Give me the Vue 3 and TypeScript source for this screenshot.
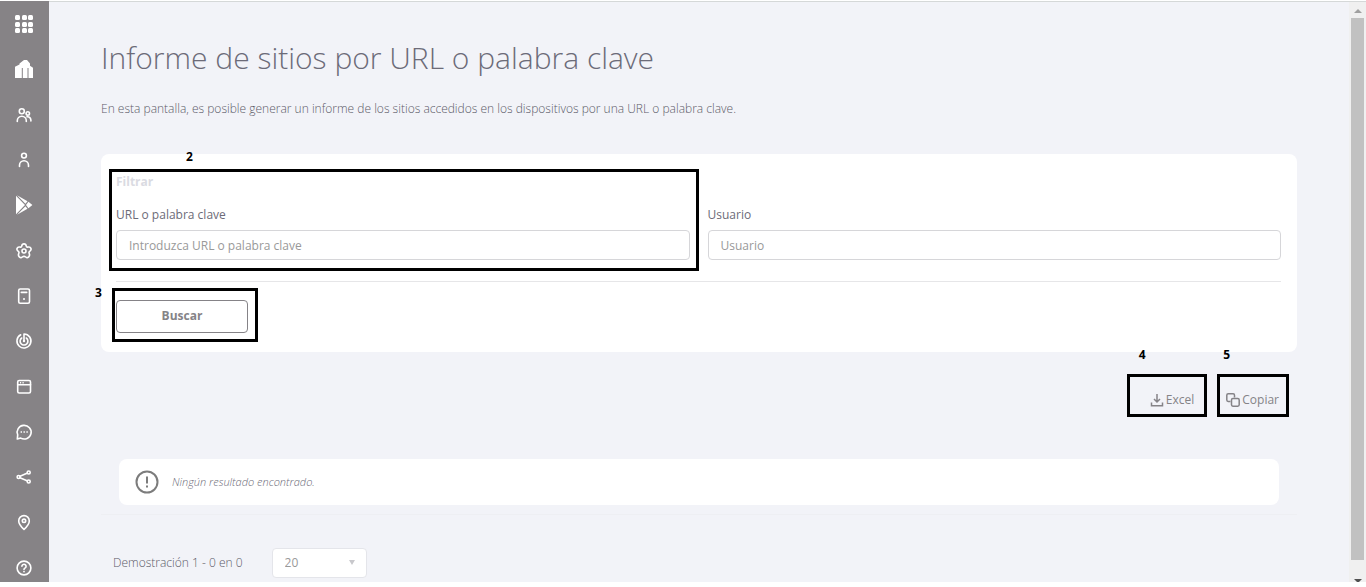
<script setup lang="ts">
import { ref } from 'vue'

interface NavItem {
  id: string
  label: string
}

const navItems: NavItem[] = [
  { id: 'apps', label: 'Aplicaciones' },
  { id: 'home', label: 'Empresa' },
  { id: 'groups', label: 'Grupos' },
  { id: 'user', label: 'Usuarios' },
  { id: 'play', label: 'Play' },
  { id: 'settings', label: 'Ajustes' },
  { id: 'device', label: 'Dispositivos' },
  { id: 'radar', label: 'Monitoreo' },
  { id: 'window', label: 'Ventanas' },
  { id: 'chat', label: 'Mensajes' },
  { id: 'share', label: 'Compartir' },
  { id: 'pin', label: 'Ubicación' },
  { id: 'help', label: 'Ayuda' },
]

const columnStops: number[] = [3, 10, 16]
const rowStops: number[] = [3, 10, 16]
const url = ref('')
const user = ref('')
const pageSize = ref('20')
</script>

<template>
  <div class="shell">
    <nav class="sidebar">
      <a v-for="item in navItems" :key="item.id" href="#" class="nav-link" :aria-label="item.label">
        <svg viewBox="0 0 24 24" class="icon">
          <g v-if="item.id === 'apps'" class="solid">
            <template v-for="y in rowStops" :key="y">
              <rect v-for="x in columnStops" :key="x" :x="x" :y="y" width="5" height="5" rx="1.5" />
            </template>
          </g>
          <g v-else-if="item.id === 'home'">
            <path class="solid" d="M3 21V9.800l4.500-2.300V6.500L12 3h3l3 3.500v2.300l3 2V21z" />
            <path class="cut" d="M10.300 11v10M16 11v10" />
          </g>
          <g v-else-if="item.id === 'groups'">
            <circle cx="9.800" cy="8.200" r="2.500" />
            <path d="M5.300 18.500v-.7a4.500 4.500 0 0 1 9 0v.7" />
            <circle cx="15.800" cy="10.400" r="1.700" />
            <path d="M15 13.800c2.400-.3 3.900 1.300 3.900 3.500v.7" />
          </g>
          <g v-else-if="item.id === 'user'">
            <circle cx="12" cy="7.600" r="2.400" />
            <path d="M7.500 18.500v-1.300a4.500 4.500 0 0 1 9 0v1.300" />
          </g>
          <g v-else-if="item.id === 'play'" class="solid">
            <path d="M4 2.700v18.600l9-9.300z" />
            <path d="M5 2.200l10.500 6.100-2.100 2.500z" />
            <path d="M5 21.800l10.500-6.100-2.100-2.500z" />
            <path d="M16.400 8.800l4 3.200-4 3.200-2.400-3.200z" />
          </g>
          <g v-else-if="item.id === 'settings'">
            <path d="M9.800 6.800C10.100 4.200 13.900 4.200 14.200 6.800C14.400 8 15.200 8.300 16.300 8C18.900 7.500 20.100 10.700 17.900 12.200C16.900 12.900 16.700 13.500 17.200 14.500C18.500 16.900 15.700 19.800 13.700 18C12.600 17.100 11.400 17.100 10.300 18C8.300 19.800 5.500 16.900 6.800 14.500C7.300 13.500 7.100 12.900 6.100 12.200C3.900 10.700 5.100 7.500 7.700 8C8.800 8.300 9.600 8 9.800 6.800Z" />
            <circle cx="12" cy="12" r="2" />
          </g>
          <g v-else-if="item.id === 'device'">
            <rect x="6.700" y="5" width="10.800" height="14.300" rx="1.500" />
            <path d="M9.300 8.400h5.400" />
            <circle class="solid" cx="12" cy="15" r="1" />
          </g>
          <g v-else-if="item.id === 'radar'">
            <path d="M12 12V5a7 7 0 1 1-3.300.8" />
            <path d="M14.300 9a3.900 3.900 0 1 1-4.600 0" />
            <circle class="solid" cx="12" cy="12" r="1.200" />
          </g>
          <g v-else-if="item.id === 'window'">
            <rect x="5.700" y="5.500" width="12.800" height="12.500" rx="1.500" />
            <path d="M5.700 9.700h12.800" />
            <path class="thin" d="M8 7.700h1.200M10.500 7.700h1.200" />
          </g>
          <g v-else-if="item.id === 'chat'">
            <path d="M5.300 19l.4-4.200a7 6.800 0 1 1 3 3.300z" />
            <path class="thin" d="M8.600 12h1.400M11.500 12h1.400M14.400 12h1.400" />
          </g>
          <g v-else-if="item.id === 'share'">
            <path d="M8 11.300l7-3M8 12.800l7 3" />
            <circle cx="6.600" cy="12" r="1.500" />
            <circle cx="16.700" cy="7.500" r="1.500" />
            <circle cx="16.700" cy="16.500" r="1.500" />
          </g>
          <g v-else-if="item.id === 'pin'">
            <path d="M12 18.400C9.500 16 6.700 13.200 6.700 9.900a5.300 5.300 0 0 1 10.600 0c0 3.300-2.800 6.100-5.300 8.500z" />
            <circle cx="12" cy="9.800" r="1.700" />
          </g>
          <g v-else>
            <circle cx="12" cy="12" r="6.900" />
            <path d="M9.900 10.300a2.100 2 0 1 1 3.300 1.600c-.8.500-1.200.9-1.200 1.600" />
            <circle class="solid" cx="12" cy="15.600" r=".9" />
          </g>
        </svg>
      </a>
    </nav>

    <main class="content">
      <h1>Informe de sitios por URL o palabra clave</h1>
      <p class="intro">
        En esta pantalla, es posible generar un informe de los sitios accedidos en los dispositivos por una URL o palabra clave.
      </p>

      <form class="card" @submit.prevent>
        <h2>Filtrar</h2>
        <div class="fields">
          <div class="field">
            <label for="url">URL o palabra clave</label>
            <input id="url" v-model="url" type="text" placeholder="Introduzca URL o palabra clave" />
            <span class="frame frame-url"></span>
            <b class="mark mark-url">2</b>
          </div>
          <div class="field">
            <label for="user">Usuario</label>
            <input id="user" v-model="user" type="text" placeholder="Usuario" />
          </div>
        </div>
        <div class="submit">
          <button type="submit" class="search">Buscar</button>
          <span class="frame frame-search"></span>
          <b class="mark mark-search">3</b>
        </div>
      </form>

      <div class="actions">
        <button type="button" class="action excel">
          <svg viewBox="0 0 14 14" class="small-icon">
            <path d="M7 1v7.500M4 6l3 3 3-3M1.500 9.500v3.200h11V9.500" />
          </svg>
          Excel
          <b class="mark mark-excel">4</b>
        </button>
        <button type="button" class="action">
          <svg viewBox="0 0 14 14" class="small-icon">
            <path d="M4.500 8.500H2.200a1.400 1.400 0 0 1-1.400-1.400V2.200A1.400 1.400 0 0 1 2.200.8h4.900a1.400 1.400 0 0 1 1.400 1.400v2.300" />
            <rect x="5.500" y="5.500" width="7.700" height="7.700" rx="1.400" />
          </svg>
          Copiar
          <b class="mark mark-copy">5</b>
        </button>
      </div>

      <section class="results">
        <div class="empty">
          <svg viewBox="0 0 24 24" class="alert">
            <circle cx="12" cy="12" r="10.500" />
            <path d="M12 6.500v7M12 15.500v2" />
          </svg>
          <em>Ningún resultado encontrado.</em>
        </div>
      </section>

      <footer class="pager">
        <label for="size">Demostración 1 - 0 en 0</label>
        <div class="select">
          <select id="size" v-model="pageSize">
            <option>20</option>
            <option>50</option>
            <option>100</option>
          </select>
          <svg viewBox="0 0 8 6" class="caret"><path d="M1 0h6L4 5z" /></svg>
        </div>
      </footer>
    </main>

    <div class="scrollbar">
      <svg viewBox="0 0 8 4" class="arrow"><path d="M0 4l4-4 4 4z" /></svg>
      <div class="thumb"></div>
      <svg viewBox="0 0 8 4" class="arrow down"><path d="M0 0h8L4 4z" /></svg>
    </div>
  </div>
</template>

<style>
body {
  margin: 0;
  background: #fff;
}
</style>

<style scoped>
.shell {
  box-sizing: border-box;
  display: flex;
  min-height: calc(100vh - 5px);
  padding-top: 1px;
  font: 12px/18px "Open Sans", "Noto Sans", sans-serif;
  color: #6c6b78;
}

.sidebar {
  box-sizing: border-box;
  display: flex;
  flex-direction: column;
  align-items: center;
  justify-content: space-between;
  width: 49px;
  padding: 11px 0 2px;
  background: #868386;
}

.nav-link {
  display: block;
  width: 24px;
  height: 24px;
  margin-right: 1px;
}

.icon {
  display: block;
  width: 24px;
  height: 24px;
  fill: none;
  stroke: #fff;
  stroke-width: 1.6;
  stroke-linecap: round;
  stroke-linejoin: round;
}

.icon .solid {
  fill: #fff;
  stroke: none;
}

.icon .cut {
  stroke: #868386;
  stroke-width: 1;
  stroke-linecap: butt;
}

.icon .thin {
  stroke-width: 1.4;
  stroke-linecap: butt;
}

.content {
  flex: 1;
  min-width: 0;
  padding: 32px 52px 0;
  border-top: 1px solid #d5d8d8;
  background: #f2f3f8;
}

h1 {
  margin: 0;
  font-size: 30px;
  line-height: 48px;
  font-weight: 300;
}

.intro {
  margin: 18px 0 36px;
  font-weight: 300;
  color: #5c5b68;
}

.card {
  padding: 19px 16px 19px 15px;
  border-radius: 8px;
  background: #fff;
}

h2 {
  margin: 0;
  font-size: 12px;
  line-height: 18px;
  font-weight: 700;
  color: #dadbe2;
}

.fields {
  display: grid;
  grid-template-columns: 1fr 1fr;
  gap: 18px;
  padding: 15px 0 21px;
  border-bottom: 1px solid #e6e6e8;
}

.field {
  position: relative;
}

.field label {
  display: block;
  margin-bottom: 6px;
}

.field input {
  box-sizing: border-box;
  display: block;
  width: 100%;
  height: 30px;
  padding: 0 12px;
  border: 1px solid #d6d6d9;
  border-radius: 4px;
  background: #fff;
  font: inherit;
  color: #6c6b78;
}

.field input::placeholder {
  color: #999;
  opacity: 1;
}

.submit {
  position: relative;
  width: 132px;
  margin-top: 18px;
}

.search {
  display: block;
  width: 100%;
  height: 33px;
  padding: 0 0 2px;
  border: 1px solid #858387;
  border-radius: 4px;
  background: #fff;
  font: inherit;
  font-weight: 700;
  color: #858387;
}

.frame {
  position: absolute;
  border: 3px solid #000;
  pointer-events: none;
}

.frame-url {
  inset: -37px -9px -11px -7px;
}

.frame-search {
  inset: -12px -10px -9px -4px;
}

.mark {
  position: absolute;
  font-size: 12px;
  line-height: 16px;
  color: #000;
}

.mark-url {
  top: -57px;
  left: 70px;
}

.mark-search {
  top: -15px;
  left: -21px;
}

.mark-excel {
  top: -30px;
  left: 9px;
}

.mark-copy {
  top: -30px;
  left: 3px;
}

.actions {
  display: flex;
  justify-content: flex-end;
  gap: 10px;
  margin: 22px 8px 0 0;
}

.action {
  position: relative;
  display: flex;
  align-items: center;
  gap: 2px;
  height: 43px;
  padding: 8px 7px 0 6px;
  border: 3px solid #000;
  background: none;
  font: inherit;
  color: #858387;
}

.excel {
  padding: 8px 10px 0 20px;
}

.small-icon {
  width: 14px;
  height: 14px;
  fill: none;
  stroke: #858387;
  stroke-width: 1.5;
}

.results {
  padding: 42px 18px 9px;
  border-bottom: 1px solid #eeeff3;
}

.empty {
  display: flex;
  align-items: center;
  gap: 13px;
  height: 46px;
  padding-left: 16px;
  border-radius: 8px;
  background: #fff;
  font-size: 11px;
  font-weight: 300;
}

.alert {
  width: 24px;
  height: 24px;
  fill: none;
  stroke: #7c7c7c;
  stroke-width: 2;
}

.pager {
  display: flex;
  align-items: center;
  gap: 29px;
  padding: 33px 12px 4px;
  font-weight: 300;
  color: #5c5b68;
}

.select {
  position: relative;
}

.select select {
  appearance: none;
  box-sizing: border-box;
  display: block;
  width: 95px;
  height: 30px;
  padding: 0 12px;
  border: 1px solid #e4e5ea;
  border-radius: 4px;
  background: #fff;
  font: inherit;
  font-weight: 400;
  color: #999;
}

.caret {
  position: absolute;
  top: 12px;
  right: 11px;
  width: 8px;
  height: 6px;
  fill: #c8c8cc;
  pointer-events: none;
}

.scrollbar {
  box-sizing: border-box;
  display: flex;
  flex-direction: column;
  align-items: center;
  width: 17px;
  padding-top: 7px;
  border-top: 1px solid #d5d8d8;
  background: #f0f0f0;
}

.arrow {
  width: 8px;
  height: 4px;
  margin-bottom: 5px;
  fill: #a0a0a0;
}

.thumb {
  flex: 1;
  width: 13px;
  background: #c1c1c1;
}

.down {
  margin: 19px 0 -1px;
  fill: #505050;
}
</style>
